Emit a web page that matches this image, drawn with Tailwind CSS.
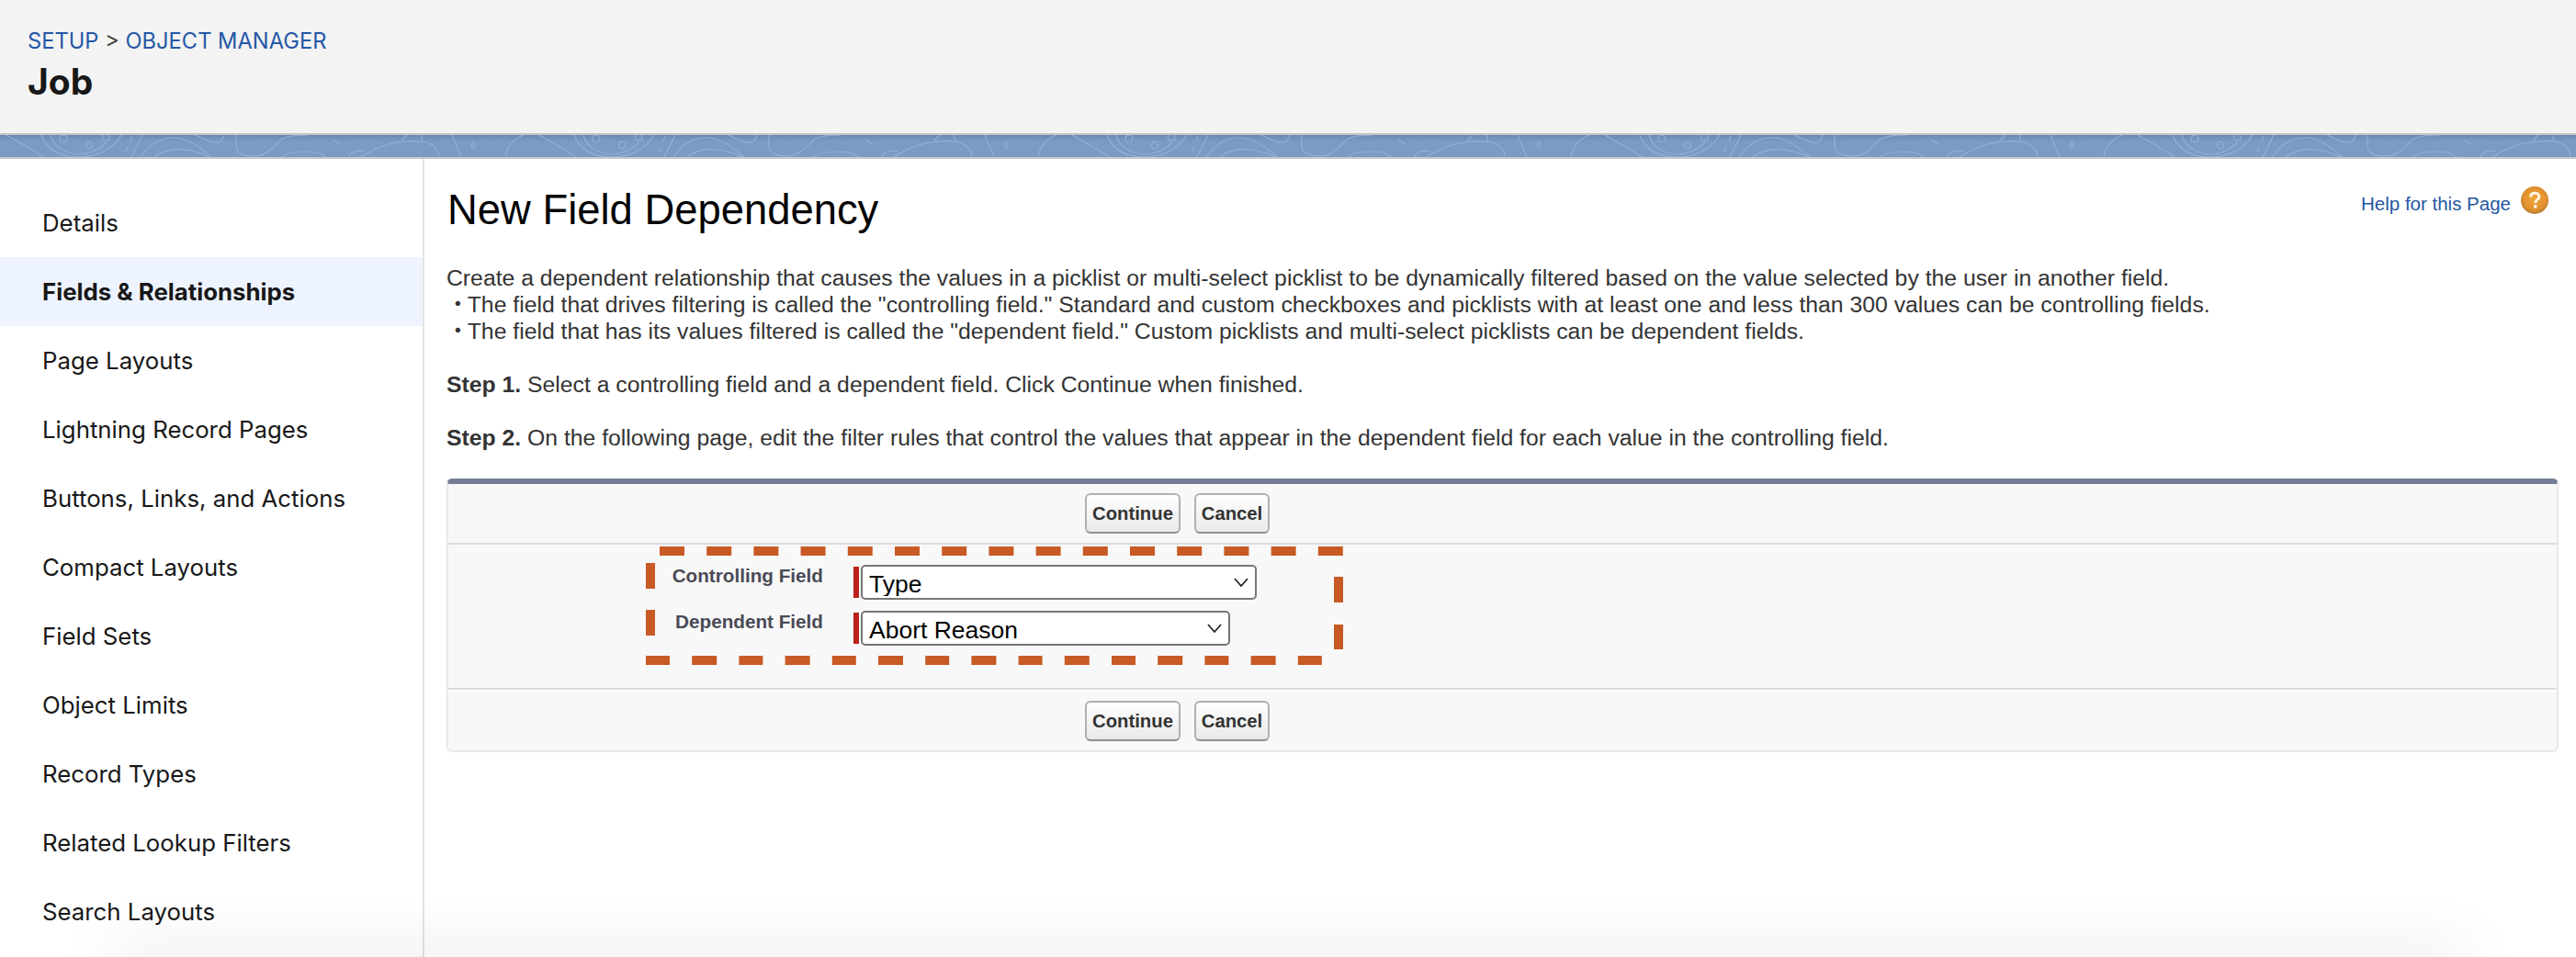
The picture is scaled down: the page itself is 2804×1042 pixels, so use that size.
<!DOCTYPE html>
<html lang="en">
<head>
<meta charset="utf-8">
<title>New Field Dependency</title>
<script src="https://cdn.jsdelivr.net/npm/@tailwindcss/browser@4"></script>
</head>
<body class="bg-white overflow-hidden">
<div class="relative w-[2804px] h-[1042px] overflow-hidden flex flex-col font-['Inter',sans-serif]">

    <!-- page header -->
    <header class="h-[145px] bg-[#f3f3f3] pl-[30px] pt-[32px] shrink-0">
        <p class="text-[23.7px] leading-[26px] text-[#444]"><a class="text-[#2557a7]">SETUP</a> &gt; <a class="text-[#2557a7]">OBJECT MANAGER</a></p>
        <h1 class="mt-[9px] text-[39px] leading-[44px] font-bold text-[#181818]">Job</h1>
    </header>

    <!-- blue band -->
    <div class="h-[28px] shrink-0 border-t-2 border-b-2 border-t-[#c4c4c4] border-b-[#c9c9c9] bg-[#7b9ac4]">
        <svg class="block w-full h-[24px]" xmlns="http://www.w3.org/2000/svg">
            <defs>
                <linearGradient id="bandShade" x1="0" y1="0" x2="0" y2="1">
                    <stop offset="0" stop-color="#6a89b5"/>
                    <stop offset="0.3" stop-color="#7b9ac4"/>
                </linearGradient>
                <pattern id="topo" width="580" height="24" patternUnits="userSpaceOnUse">
                    <g fill="none" stroke="#95aed2" stroke-width="1.2">
                        <path d="M7,0 C20,8 35,15 47,24"/>
                        <path d="M45,0 C50,15 65,24 85,24 C110,24 125,12 132,0"/>
                        <path d="M55,0 C58,12 70,20 85,21 C100,21 110,14 116,8"/>
                        <circle cx="69" cy="4" r="4"/>
                        <ellipse cx="97" cy="11" rx="3.5" ry="4"/>
                        <path d="M112,0 C110,4 114,8 117,5 C119,8 120,3 118,0"/>
                        <path d="M137,18 L139,13 M142,6 L144,1"/>
                        <path d="M143,24 L155,0"/>
                        <path d="M153,24 C165,8 175,3 190,3 C205,3 220,15 230,24"/>
                        <path d="M168,24 C178,16 190,15 200,16 C210,17 222,21 228,24"/>
                        <path d="M213,0 C225,6 232,9 238,8 C241,7 243,3 244,0"/>
                        <path d="M257,0 L257,12 C257,20 265,23 278,23 C290,23 298,12 306,5 C312,1 325,0 335,0"/>
                        <path d="M306,24 C315,18 330,17 345,19 L355,24"/>
                        <path d="M362,5 L370,10"/>
                        <path d="M380,24 C381,18 390,16 397,18"/>
                        <path d="M393,24 C415,10 435,5 460,7 C470,8 480,18 477,24"/>
                        <path d="M437,6 L443,0 M460,6 L458,0"/>
                        <path d="M492,0 L502,24"/>
                        <ellipse cx="515" cy="11" rx="1.5" ry="4"/>
                        <path d="M550,24 C552,12 560,4 570,0"/>
                    </g>
                </pattern>
            </defs>
            <rect width="100%" height="24" fill="url(#bandShade)"/>
            <rect width="100%" height="24" fill="url(#topo)"/>
        </svg>
    </div>

    <div class="flex flex-1 min-h-0">
        <!-- left nav -->
        <nav class="w-[462px] shrink-0 border-r-2 border-[#e4e4e4] pt-[32px] text-[25.8px] text-[#181818]">
            <a class="flex items-center h-[75px] pl-[46px] pt-[2px]">Details</a>
            <a class="flex items-center h-[75px] pl-[46px] pt-[2px] bg-[#eef4ff] font-bold">Fields &amp; Relationships</a>
            <a class="flex items-center h-[75px] pl-[46px] pt-[2px]">Page Layouts</a>
            <a class="flex items-center h-[75px] pl-[46px] pt-[2px]">Lightning Record Pages</a>
            <a class="flex items-center h-[75px] pl-[46px] pt-[2px]">Buttons, Links, and Actions</a>
            <a class="flex items-center h-[75px] pl-[46px] pt-[2px]">Compact Layouts</a>
            <a class="flex items-center h-[75px] pl-[46px] pt-[2px]">Field Sets</a>
            <a class="flex items-center h-[75px] pl-[46px] pt-[2px]">Object Limits</a>
            <a class="flex items-center h-[75px] pl-[46px] pt-[2px]">Record Types</a>
            <a class="flex items-center h-[75px] pl-[46px] pt-[2px]">Related Lookup Filters</a>
            <a class="flex items-center h-[75px] pl-[46px] pt-[2px]">Search Layouts</a>
        </nav>

        <!-- content -->
        <main class="flex-1 min-w-0 pl-[24px] pr-[19px] font-['Liberation_Sans',sans-serif]">
            <div class="flex justify-between items-start pt-[28px] h-[115px]">
                <h2 class="pl-[1px] text-[45.4px] leading-[56px] text-black">New Field Dependency</h2>
                <a class="flex items-center gap-[11px] mt-[2px] mr-[11px] text-[20.5px] leading-[30px] text-[#2557a0]">
                    <span class="translate-y-[4px]">Help for this Page</span>
                    <svg width="30" height="30" viewBox="0 0 30 30" xmlns="http://www.w3.org/2000/svg">
                        <defs>
                            <radialGradient id="helpBall" cx="0.5" cy="0.45" r="0.55">
                                <stop offset="0" stop-color="#efa63d"/>
                                <stop offset="0.75" stop-color="#e2902c"/>
                                <stop offset="1" stop-color="#b27a33"/>
                            </radialGradient>
                        </defs>
                        <circle cx="15" cy="15" r="15" fill="url(#helpBall)"/>
                        <path d="M10.5,11.5 C10.8,8.5 12.8,7.3 15.2,7.3 C18,7.3 19.8,9 19.8,11.2 C19.8,13 18.8,13.9 17.4,14.9 C16.2,15.8 15.8,16.4 15.8,18" fill="none" stroke="#fff6e6" stroke-width="3"/>
                        <rect x="14" y="20" width="3.4" height="3.4" fill="#fff6e6"/>
                    </svg>
                </a>
            </div>

            <div class="text-[24.75px] leading-[29px] text-[#333]">
                <p>Create a dependent relationship that causes the values in a picklist or multi-select picklist to be dynamically filtered based on the value selected by the user in another field.</p>
                <p class="font-['Liberation_Sans','Noto_Sans_CJK_JP',sans-serif]"><span class="-mr-[2px]">・</span>The field that drives filtering is called the "controlling field." Standard and custom checkboxes and picklists with at least one and less than 300 values can be controlling fields.</p>
                <p class="font-['Liberation_Sans','Noto_Sans_CJK_JP',sans-serif]"><span class="-mr-[2px]">・</span>The field that has its values filtered is called the "dependent field." Custom picklists and multi-select picklists can be dependent fields.</p>
                <p class="mt-[29px]"><b>Step 1.</b> Select a controlling field and a dependent field. Click Continue when finished.</p>
                <p class="mt-[29px]"><b>Step 2.</b> On the following page, edit the filter rules that control the values that appear in the dependent field for each value in the controlling field.</p>
            </div>

            <!-- form panel -->
            <form class="mt-[30px] h-[298px] rounded-[6px] border-2 border-t-[6px] border-[#e8e8e8] border-t-[#747e96] bg-[#f8f8f8]">
                <div class="h-[66px] pt-[10px] pl-[693px] flex gap-[15px] border-b-2 border-[#dcdcdc]">
                    <button type="button" class="w-[104px] h-[44px] rounded-[6px] border-2 border-[#b0b0b0] border-b-[#8f8f8f] bg-gradient-to-b from-white to-[#e9e9e9] text-[20.3px] font-bold text-[#333]">Continue</button>
                    <button type="button" class="w-[82px] h-[44px] rounded-[6px] border-2 border-[#b0b0b0] border-b-[#8f8f8f] bg-gradient-to-b from-white to-[#e9e9e9] text-[20.3px] font-bold text-[#333]">Cancel</button>
                </div>
                <div class="h-[158px] pt-[22px] flex flex-col gap-[12px] border-b-2 border-[#dcdcdc]">
                    <div class="flex h-[38px]">
                        <label class="w-[408px] text-right text-[20.7px] leading-[24px] font-bold text-[#4a4a56]">Controlling Field</label>
                        <span class="ml-[33px] self-center w-[6px] h-[34px] bg-[#b9231b]"></span>
                        <div class="relative ml-[2px] w-[431px]">
                            <select class="w-full h-[38px] appearance-none rounded-[5px] border-2 border-[#767676] bg-white pl-[7px] pb-[2px] text-[26.5px] text-black"><option>Type</option></select>
                            <svg class="absolute right-[9px] top-[14px]" width="16" height="10" viewBox="0 0 16 10" xmlns="http://www.w3.org/2000/svg"><path d="M1,1 L8,9 L15,1" fill="none" stroke="#222" stroke-width="1.7"/></svg>
                        </div>
                    </div>
                    <div class="flex h-[38px]">
                        <label class="w-[408px] text-right text-[20.7px] leading-[24px] font-bold text-[#4a4a56]">Dependent Field</label>
                        <span class="ml-[33px] self-center w-[6px] h-[34px] bg-[#b9231b]"></span>
                        <div class="relative ml-[2px] w-[402px]">
                            <select class="w-full h-[38px] appearance-none rounded-[5px] border-2 border-[#767676] bg-white pl-[7px] pb-[2px] text-[26.5px] text-black"><option>Abort Reason</option></select>
                            <svg class="absolute right-[9px] top-[14px]" width="16" height="10" viewBox="0 0 16 10" xmlns="http://www.w3.org/2000/svg"><path d="M1,1 L8,9 L15,1" fill="none" stroke="#222" stroke-width="1.7"/></svg>
                        </div>
                    </div>
                </div>
                <div class="pt-[10px] pl-[693px] flex gap-[15px] border-t-2 border-white">
                    <button type="button" class="w-[104px] h-[44px] rounded-[6px] border-2 border-[#b0b0b0] border-b-[#8f8f8f] bg-gradient-to-b from-white to-[#e9e9e9] text-[20.3px] font-bold text-[#333]">Continue</button>
                    <button type="button" class="w-[82px] h-[44px] rounded-[6px] border-2 border-[#b0b0b0] border-b-[#8f8f8f] bg-gradient-to-b from-white to-[#e9e9e9] text-[20.3px] font-bold text-[#333]">Cancel</button>
                </div>
            </form>
        </main>
    </div>

    <!-- dashed annotation over the form -->
    <svg class="absolute left-0 top-0 pointer-events-none" width="2804" height="1042" xmlns="http://www.w3.org/2000/svg">
        <g fill="none" stroke="#c85a25" stroke-width="10">
            <path d="M718,600 H1462" stroke-dasharray="27 24.2"/>
            <path d="M703,719 H1445" stroke-dasharray="26 24.2 27 24.2"/>
            <path d="M708,613 V692" stroke-dasharray="28 23"/>
            <path d="M1457,628 V707" stroke-dasharray="28 24"/>
        </g>
    </svg>

    <!-- soft shadow along the bottom edge -->
    <div class="absolute left-[130px] right-[130px] bottom-[-20px] h-[20px] shadow-[0_0_70px_10px_rgba(0,0,0,0.09)] pointer-events-none"></div>
</div>
</body>
</html>
